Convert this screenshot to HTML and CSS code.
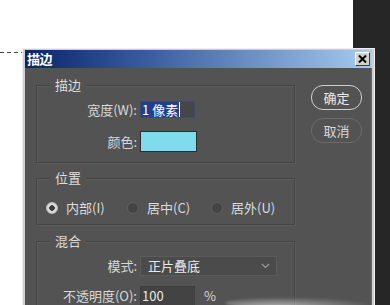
FILE: index.html
```html
<!DOCTYPE html>
<html lang="zh">
<head>
<meta charset="utf-8">
<link rel="stylesheet" href="styles.css">
</head>
<body>
<div class="screen">
  <div class="marquee"></div>
  <div class="dialog">
    <div class="titlebar">
      <span class="title">描边</span>
      <span class="close"><svg width="9" height="8" viewBox="0 0 9 8"><path d="M1 0.5 L8 7.5 M8 0.5 L1 7.5" stroke="#000" stroke-width="2"/></svg></span>
    </div>
    <div class="body">
      <div class="groups">
        <section class="group g-stroke">
          <span class="legend">描边</span>
          <div class="form">
            <span class="lbl">宽度(W):</span>
            <div class="field width-field"><span class="sel">1 像素</span></div>
            <span class="lbl">颜色:</span>
            <div class="swatch"></div>
          </div>
        </section>
        <section class="group g-pos">
          <span class="legend">位置</span>
          <div class="radios">
            <span class="radio r1"><span class="dot on"></span>内部(I)</span>
            <span class="radio r2"><span class="dot"></span>居中(C)</span>
            <span class="radio r3"><span class="dot"></span>居外(U)</span>
          </div>
        </section>
        <section class="group g-blend">
          <span class="legend">混合</span>
          <div class="form blend-form">
            <span class="lbl">模式:</span>
            <div class="select"><span>正片叠底</span><svg width="9" height="6" viewBox="0 0 9 6"><path d="M1 1 L4.5 4.5 L8 1" fill="none" stroke="#9a9a9a" stroke-width="1.2"/></svg></div>
            <span class="lbl">不透明度(O):</span>
            <div class="opacity"><div class="field op-field">100</div><span class="pct">%</span></div>
          </div>
        </section>
      </div>
      <div class="buttons">
        <span class="btn ok">确定</span>
        <span class="btn cancel">取消</span>
      </div>
      <div class="smudge"></div>
    </div>
  </div>
</div>
</body>
</html>
```
FILE: styles.css
```css
* { box-sizing: border-box; }
html, body { margin: 0; padding: 0; }
body {
  width: 390px;
  height: 305px;
  overflow: hidden;
  font-family: "Noto Sans CJK SC", "Noto Sans", sans-serif;
}
.screen {
  position: relative;
  width: 390px;
  height: 305px;
  background: linear-gradient(to right, #ffffff 353px, #262626 353px);
  overflow: hidden;
}
.marquee {
  position: absolute;
  left: 0;
  top: 52px;
  width: 22px;
  height: 1px;
  background: repeating-linear-gradient(to right, #444 0 4px, transparent 4px 7px);
}
.dialog {
  position: absolute;
  left: 22px;
  top: 48px;
  width: 353px;
  height: 280px;
  background: #cfcfcf;
  border: 1px solid #eeeeee;
  padding: 1px 2px 0 2px;
  display: flex;
  flex-direction: column;
}
.titlebar {
  height: 18px;
  display: flex;
  align-items: center;
  justify-content: space-between;
  padding: 0 2px 0 2px;
  background: linear-gradient(to right, #0a246a 0%, #3a5c9e 35%, #a6caf0 100%);
}
.title {
  color: #fff;
  font-weight: bold;
  font-size: 13px;
  line-height: 18px;
  letter-spacing: -0.5px;
}
.close {
  width: 15px;
  height: 14px;
  background: #d4d0c8;
  border-top: 1px solid #fff;
  border-left: 1px solid #fff;
  border-right: 1px solid #404040;
  border-bottom: 1px solid #404040;
  display: flex;
  align-items: center;
  justify-content: center;
}
.body {
  position: relative;
  flex: 1;
  display: flex;
  background: #535353;
  padding: 9px 9px 0 11px;
  gap: 16px;
  color: #dcdcdc;
  font-size: 13px;
  line-height: 16px;
  border-right: 1px solid #6a6a6a;
}
.groups {
  width: 260px;
  display: flex;
  flex-direction: column;
}
.group {
  border: 1px solid #444444;
  box-shadow: 1px 1px 0 #5d5d5d, inset 1px 1px 0 #5d5d5d;
  margin-top: 8px;
}
.group:first-child { margin-top: 8px; }
.g-stroke { padding-bottom: 10px; }
.g-pos { margin-top: 15px; padding-bottom: 8px; }
.g-blend { margin-top: 16px; padding-bottom: 20px; }
.legend {
  display: table;
  margin: -9px 0 0 13px;
  padding: 0 5px;
  background: #535353;
  color: #dedede;
  line-height: 16px;
}
.form {
  display: grid;
  grid-template-columns: 100px auto;
  column-gap: 3px;
  row-gap: 13px;
  align-items: center;
  justify-items: start;
  margin-top: 8px;
}
.lbl {
  justify-self: end;
  color: #d8d8d8;
  white-space: nowrap;
}
.field {
  width: 55px;
  height: 17px;
  background: #464646;
  border: 1px solid #3c4c6a;
  display: flex;
  align-items: center;
  color: #e8e8e8;
  font-size: 13px;
}
.sel {
  background: #223f8f;
  color: #fff;
  height: 15px;
  line-height: 15px;
  padding: 0 1px;
  border-right: 1px solid #fff;
}
.swatch {
  width: 57px;
  height: 21px;
  background: #7fdcee;
  border: 1px solid #2e2e2e;
}
.radios {
  display: flex;
  align-items: center;
  margin-top: 14px;
  padding-left: 9px;
  height: 16px;
}
.radio {
  display: flex;
  align-items: center;
  gap: 8px;
  white-space: nowrap;
}
.r1 { width: 81px; }
.r2 { width: 84px; }
.dot {
  width: 12px;
  height: 12px;
  border-radius: 50%;
  background: #444444;
  border: 1.5px solid #606060;
}
.dot.on {
  background: radial-gradient(circle, #3a3a3a 0 2.5px, #d9d9d9 3px);
  border: 1px solid #bdbdbd;
}
.blend-form {
  margin-top: 7px;
  row-gap: 10px;
}
.select {
  width: 137px;
  height: 20px;
  background: #4b4b4b;
  border: 1px solid #5b5b5b;
  display: flex;
  align-items: center;
  justify-content: space-between;
  padding: 0 6px 0 7px;
  color: #eaeaea;
}
.opacity {
  display: flex;
  align-items: center;
  gap: 9px;
}
.op-field {
  height: 20px;
  border: 1px solid #3e3e3e;
  background: #434343;
  padding-left: 1px;
}
.pct { color: #d8d8d8; }
.buttons {
  display: flex;
  flex-direction: column;
  gap: 8px;
  margin-top: 8px;
}
.btn {
  width: 51px;
  height: 25px;
  border-radius: 12px;
  display: flex;
  align-items: center;
  justify-content: center;
  font-size: 13px;
  color: #ececec;
}
.ok { border: 1.5px solid #cfcfcf; }
.cancel { border: 1px solid #6b6b6b; color: #dadada; }
.smudge {
  position: absolute;
  left: 200px;
  top: 229px;
  width: 150px;
  height: 12px;
  border-radius: 50%;
  background: radial-gradient(ellipse at 35% 80%, rgba(255,255,255,0.55), rgba(255,255,255,0.2) 45%, rgba(255,255,255,0) 72%);
  filter: blur(1px);
}
```
